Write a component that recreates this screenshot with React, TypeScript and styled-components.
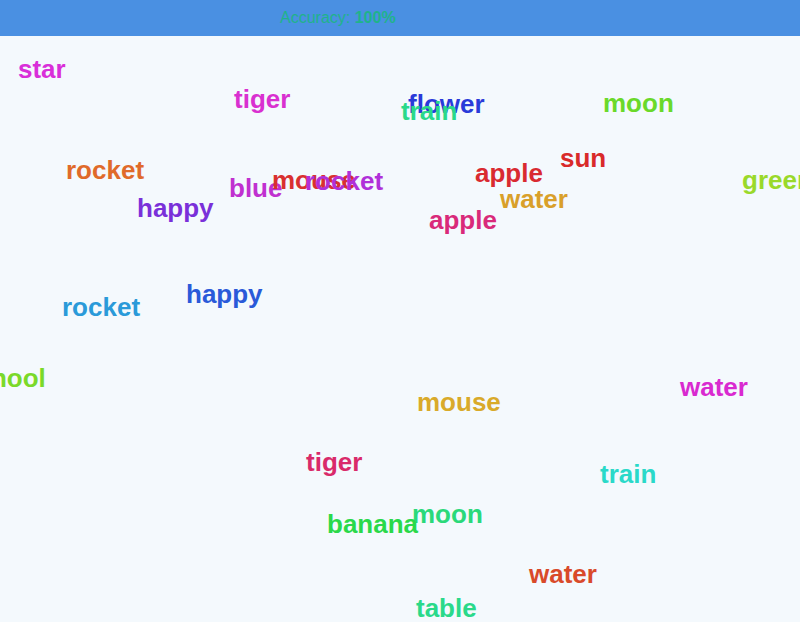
import React from 'react';
import styled, { createGlobalStyle } from 'styled-components';

interface FallingWord {
  id: number;
  text: string;
  x: number;
  y: number;
  color: string;
}

const words: FallingWord[] = [
  { id: 1, text: 'star', x: 18, y: 20, color: '#d92fd9' },
  { id: 2, text: 'tiger', x: 234, y: 50, color: '#d930d0' },
  { id: 3, text: 'flower', x: 408, y: 55, color: '#2a3ad9' },
  { id: 4, text: 'train', x: 401, y: 62, color: '#2ad98a' },
  { id: 5, text: 'moon', x: 603, y: 54, color: '#6ad92a' },
  { id: 6, text: 'sun', x: 560, y: 109, color: '#d92a2a' },
  { id: 7, text: 'rocket', x: 66, y: 121, color: '#e06a2a' },
  { id: 8, text: 'apple', x: 475, y: 124, color: '#d92a30' },
  { id: 9, text: 'blue', x: 229, y: 139, color: '#c030d0' },
  { id: 10, text: 'mouse', x: 272, y: 131, color: '#d93030' },
  { id: 11, text: 'rocket', x: 305, y: 132, color: '#b030d9' },
  { id: 12, text: 'green', x: 742, y: 131, color: '#9ad92a' },
  { id: 13, text: 'water', x: 500, y: 150, color: '#d9a02a' },
  { id: 14, text: 'happy', x: 137, y: 159, color: '#7a30d9' },
  { id: 15, text: 'apple', x: 429, y: 171, color: '#d92a7a' },
  { id: 16, text: 'happy', x: 186, y: 245, color: '#2a5ad9' },
  { id: 17, text: 'rocket', x: 62, y: 258, color: '#2a9ad9' },
  { id: 18, text: 'school', x: -38, y: 329, color: '#7ad92a' },
  { id: 19, text: 'water', x: 680, y: 338, color: '#d92ad0' },
  { id: 20, text: 'mouse', x: 417, y: 353, color: '#d9aa2a' },
  { id: 21, text: 'tiger', x: 306, y: 413, color: '#d92a6a' },
  { id: 22, text: 'train', x: 600, y: 425, color: '#2ad9c9' },
  { id: 23, text: 'moon', x: 412, y: 465, color: '#2ad97a' },
  { id: 24, text: 'banana', x: 327, y: 475, color: '#2ad94a' },
  { id: 25, text: 'water', x: 529, y: 525, color: '#d94a2a' },
  { id: 26, text: 'table', x: 416, y: 559, color: '#2ad98a' },
];

const GlobalStyle = createGlobalStyle`
  html, body {
    margin: 0;
    padding: 0;
    background: #f4f9fd;
    overflow: hidden;
  }
  body {
    font-family: "Liberation Sans", Arial, sans-serif;
  }
`;

const Page = styled.div`
  display: flex;
  flex-direction: column;
  width: 800px;
  height: 622px;
  overflow: hidden;
`;

// top bar
const Header = styled.div`
  display: flex;
  align-items: center;
  height: 36px;
  padding-left: 280px;
  background: #4a90e2;
  flex-shrink: 0;
`;

const Stat = styled.div`
  font-size: 16px;
  color: #1fb38a;
`;

const StatValue = styled.span`
  font-weight: bold;
`;

const Playfield = styled.div`
  position: relative;
  flex: 1;
  background: #f4f9fd;
`;

const Word = styled.span<{ $color: string }>`
  position: absolute;
  font-size: 26px;
  line-height: 1;
  font-weight: bold;
  white-space: nowrap;
  color: ${({ $color }) => $color};
`;

const App: React.FC = (): JSX.Element => {
  return (
    <>
      <GlobalStyle />
      <Page>
        <Header>
          <Stat>
            Accuracy: <StatValue>100%</StatValue>
          </Stat>
        </Header>
        <Playfield>
          {words.map((w) => (
            <Word key={w.id} $color={w.color} style={{ left: w.x, top: w.y }}>
              {w.text}
            </Word>
          ))}
        </Playfield>
      </Page>
    </>
  );
};

export default App;
